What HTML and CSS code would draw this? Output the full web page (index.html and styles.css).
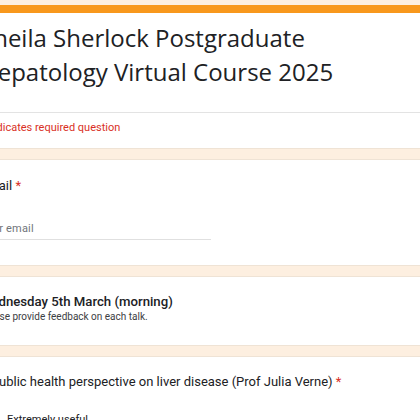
FILE: index.html
```html
<!DOCTYPE html>
<html lang="en">
<head>
<meta charset="utf-8">
<title>Sheila Sherlock Postgraduate Hepatology Virtual Course 2025</title>
<link rel="stylesheet" href="styles.css">
</head>
<body>
<main class="page">
  <section class="card header">
    <div class="title-sec">
      <h1 class="title">Sheila Sherlock Postgraduate Hepatology Virtual Course 2025</h1>
    </div>
    <div class="req-sec">
      <span class="req">* Indicates required question</span>
    </div>
  </section>

  <section class="card question">
    <div class="qtitle">Email <span class="star">*</span></div>
    <div class="input"><span class="placeholder">Your email</span></div>
  </section>

  <section class="card section">
    <div class="stitle">Wednesday 5th March (morning)</div>
    <div class="sdesc">Please provide feedback on each talk.</div>
  </section>

  <section class="card question last">
    <div class="qtitle">A public health perspective on liver disease (Prof Julia Verne) <span class="star">*</span></div>
    <div class="options">
      <label class="opt"><span class="radio"></span><span class="opt-text">Extremely useful</span></label>
    </div>
  </section>
</main>
</body>
</html>
```
FILE: styles.css
```css
html, body {
  margin: 0;
  padding: 0;
}
body {
  background: #fdefe0;
  overflow: hidden;
  width: 420px;
  height: 420px;
  font-family: Roboto, "Liberation Sans", sans-serif;
  color: #202124;
}
.page {
  width: 520px;
  margin-left: -45px;
  padding-top: 5px;
  display: flex;
  flex-direction: column;
  gap: 10px;
}
.card {
  background: #fff;
  border: 1px solid #efe3d5;
  border-radius: 8px;
}
.header {
  border-top: 8px solid #f8981d;
}
.title-sec {
  padding: 8px 24px 23px;
  border-bottom: 1px solid #e3e3e3;
}
.title {
  margin: 0;
  width: 420px;
  font-family: "Open Sans", sans-serif;
  font-weight: 400;
  font-size: 24px;
  line-height: 34px;
  color: #202124;
}
.req-sec {
  padding: 7px 24px 12px;
}
.req {
  display: block;
  font-size: 11px;
  line-height: 16px;
  color: #d93025;
}
.question {
  padding: 16px 24px 25px;
}
.qtitle {
  font-size: 13px;
  line-height: 20px;
  color: #202124;
}
.star {
  color: #d93025;
}
.input {
  width: 231px;
  margin-top: 26px;
  padding-bottom: 3px;
  border-bottom: 1px solid #e0e0e0;
}
.placeholder {
  display: block;
  font-size: 11px;
  line-height: 14px;
  color: #70757a;
  letter-spacing: 0.2px;
}
.section {
  padding: 16px 24px 21px;
}
.stitle {
  font-weight: 500;
  font-size: 13.2px;
  line-height: 18px;
}
.sdesc {
  font-size: 10px;
  line-height: 14px;
  margin-top: -1px;
  color: #3c4043;
}
.last {
  padding-top: 15px;
}
.options {
  margin-top: 19px;
}
.opt {
  display: flex;
  align-items: center;
  gap: 9px;
}
.radio {
  width: 14px;
  height: 14px;
  border: 2px solid #5f6368;
  border-radius: 50%;
}
.opt-text {
  font-size: 11px;
  line-height: 16px;
}
```
